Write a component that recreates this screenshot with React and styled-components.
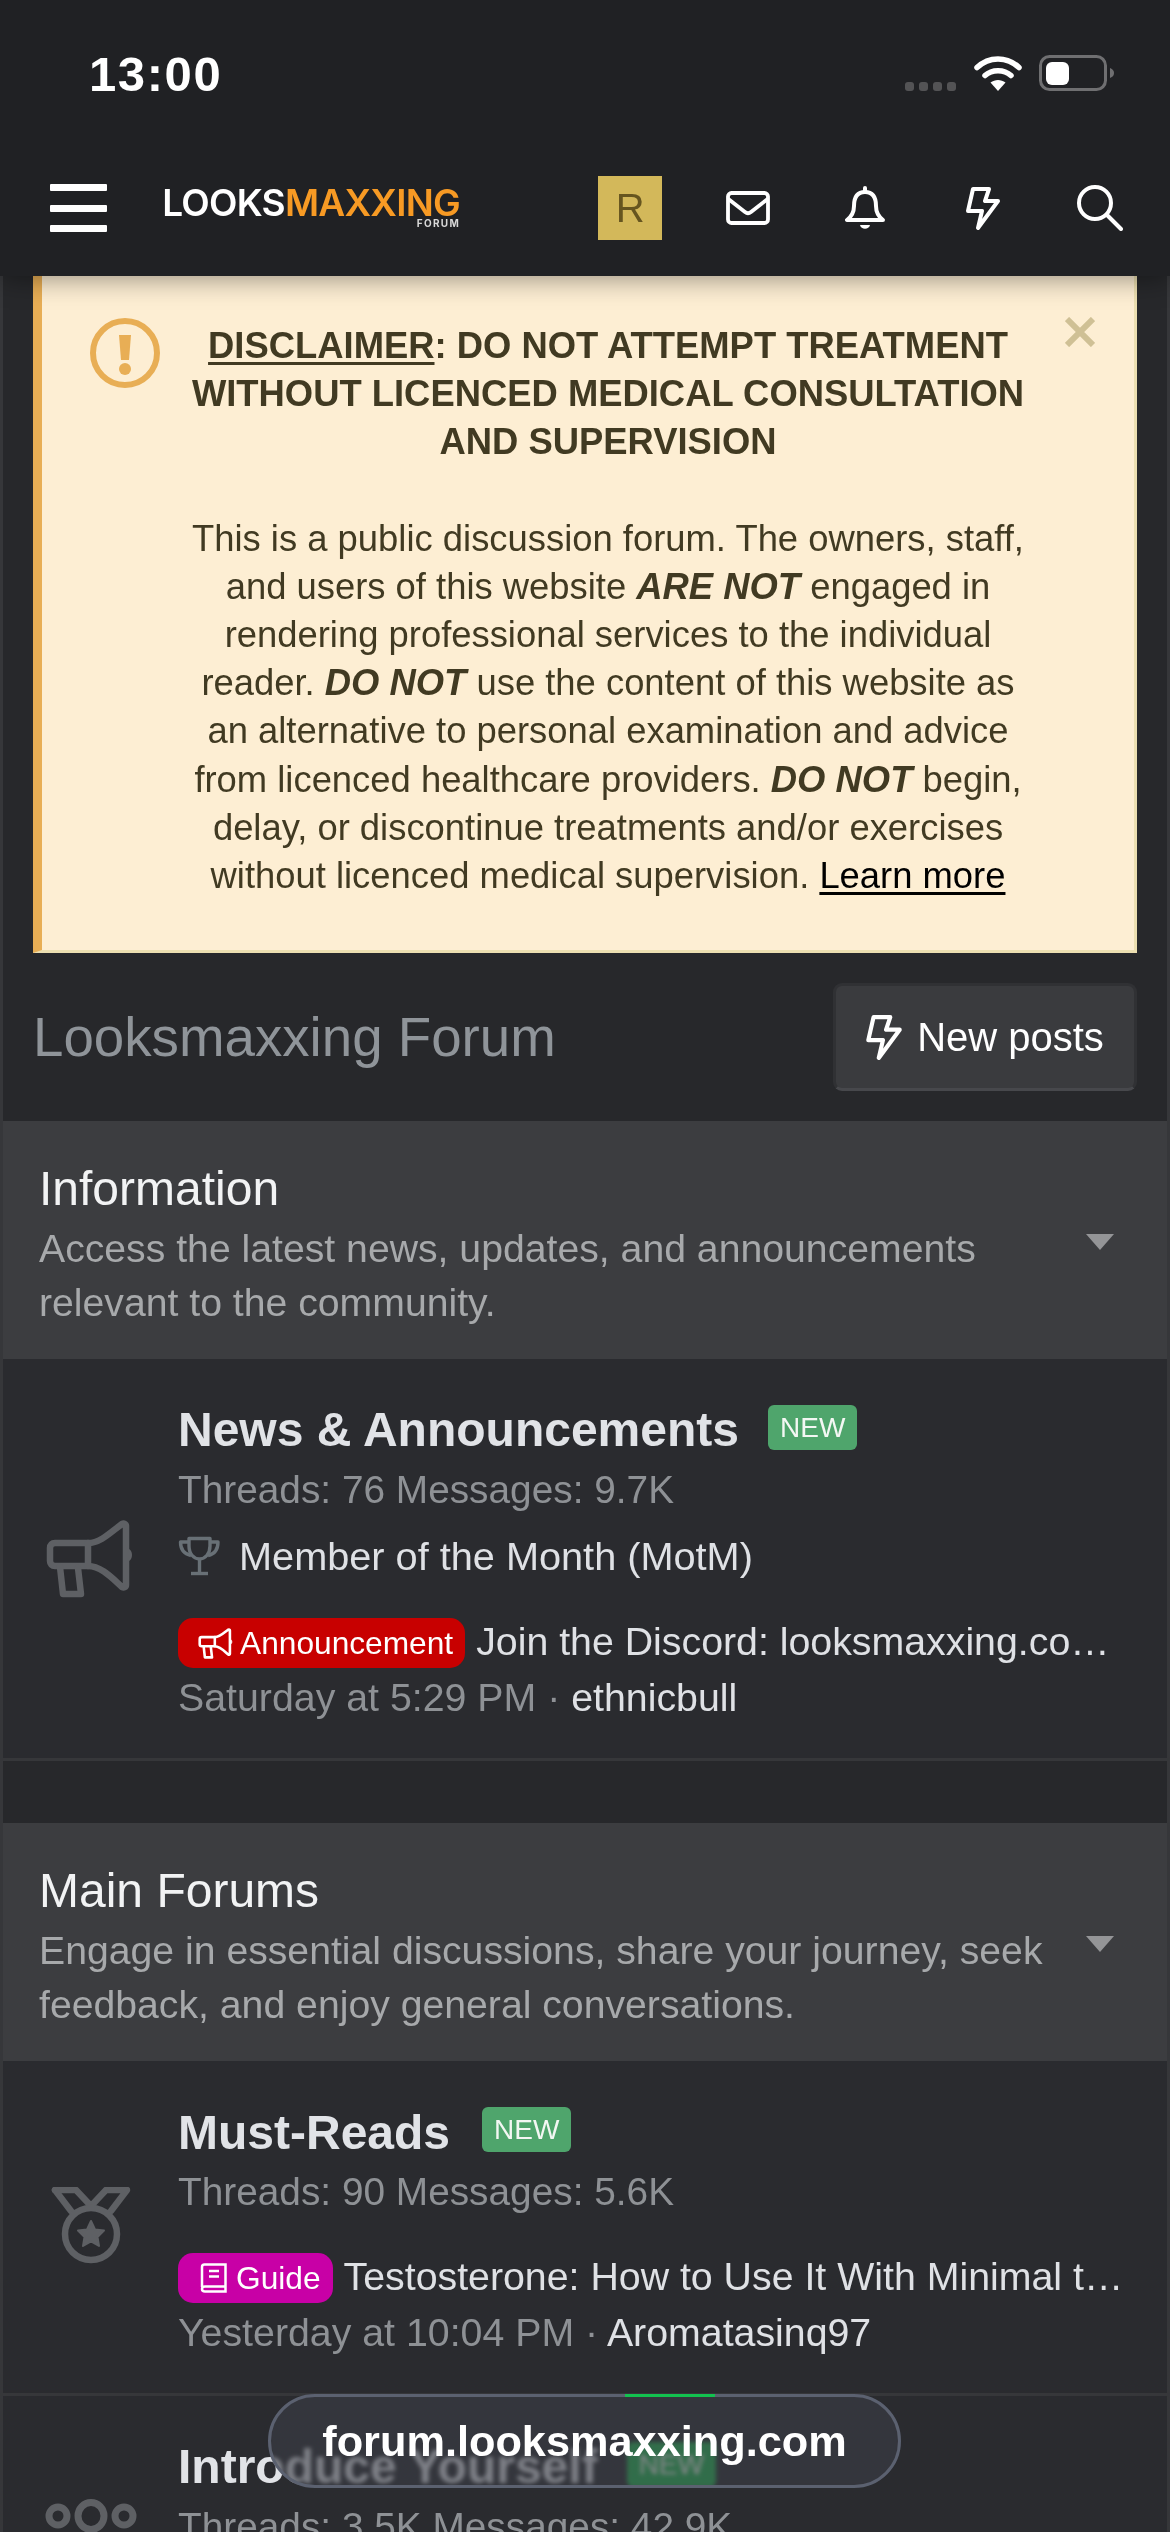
import React from "react";
import styled, { createGlobalStyle } from "styled-components";

const Global = createGlobalStyle`
  html, body { margin: 0; padding: 0; background: #27282b; }
  * { box-sizing: border-box; }
`;
const Screen = styled.div`
  position: relative; width: 1170px; height: 2532px; overflow: hidden;
  background: #27282b; font-family: "Liberation Sans", Arial, sans-serif; color: #dfe1e5;
`;
const TopBar = styled.header`
  position: relative; z-index: 2; height: 276px; background: #202124;
  box-shadow: 0 2px 26px rgba(0,0,0,.42); display: flex; flex-direction: column;
`;
const StatusBar = styled.div`
  height: 150px; display: flex; justify-content: space-between; align-items: flex-start;
  padding: 0 55px 0 89px;
`;
const Clock = styled.div`
  margin-top: 47px; font-size: 49px; line-height: 54px; font-weight: 700; color: #fff; letter-spacing: 1.6px;
`;
const StatusIcons = styled.div`
  margin-top: 55px; display: flex; align-items: flex-start; gap: 17px;
`;
const NavRow = styled.nav`
  flex: 1; display: flex; align-items: center; padding: 0 11px 0 50px; margin-top: -10px;
`;
const Hamburger = styled.div`
  width: 57px; height: 48px; display: flex; flex-direction: column; justify-content: space-between;
  span { display: block; height: 7px; background: #fff; border-radius: 1px; }
`;
const Logo = styled.div`
  margin-left: 55px; width: 298px; display: flex; flex-direction: column; align-items: flex-end;
  font-family: Inter, "Liberation Sans", sans-serif;
`;
const LogoMain = styled.div`
  font-size: 37px; line-height: 31px; font-weight: 600; color: #fff; letter-spacing: -.75px; white-space: nowrap;
  b { font-weight: 600; color: #f79a24; }
`;
const LogoSub = styled.div`
  font-size: 10px; line-height: 11px; font-weight: 700; color: #d8d8d8; letter-spacing: 1.3px;
`;
const NavIcons = styled.div`
  margin-left: auto; display: flex; align-items: center;
`;
const NavCell = styled.div`
  width: 117.5px; height: 64px; display: flex; align-items: center; justify-content: center;
`;
const Avatar = styled.div`
  width: 64px; height: 64px; background: #d3b85a; color: #66551f; font-size: 40px;
  display: flex; align-items: center; justify-content: center;
`;
const Main = styled.main`
  border-left: 3px solid #36373a; border-right: 3px solid #36373a; min-height: 2256px;
`;
const Notice = styled.section`
  position: relative; margin: 0 30px; height: 677px; background: #fdeed3; color: #413a22;
  border: 3px solid #ecdfb1; border-top: 0; border-left: 9px solid #e8ae55;
  padding: 46px 58px 0 98px; font-size: 36.4px; line-height: 48.2px; text-align: center;
  display: flex; flex-direction: column; gap: 48px;
`;
const NoticeIcon = styled.svg`
  position: absolute; left: 48px; top: 42px; width: 70px; height: 70px;
`;
const NoticeClose = styled.svg`
  position: absolute; right: 39px; top: 41px; width: 30px; height: 30px;
`;
const NoticeHead = styled.div`
  font-weight: 700; white-space: nowrap; u { text-decoration-thickness: 3px; text-underline-offset: 4px; }
`;
const NoticeBody = styled.div`
  white-space: nowrap;
  b { font-style: italic; }
  a { color: #000; text-decoration: underline; text-decoration-thickness: 3px; text-underline-offset: 4px; }
`;
const TitleBar = styled.div`
  display: flex; justify-content: space-between; align-items: center; margin: 30px 30px;
`;
const PageTitle = styled.h1`
  margin: 0; font-size: 54.7px; font-weight: 400; color: #8f9499; line-height: 66px;
`;
const NewPosts = styled.div`
  width: 304px; height: 108px; border: 3px solid #303134; border-bottom-color: #47484c; border-radius: 9px;
  background: #3a3b3e; color: #fff; font-size: 40px; display: flex; align-items: center; justify-content: center; gap: 15px;
`;
const SectionHead = styled.div`
  background: #3c3d40; display: flex; align-items: center; justify-content: space-between;
  padding: 36px 53px 29px 36px; margin-top: ${p => p.$gap || 0}px;
`;
const SectionText = styled.div`width: 1010px;`;
const SectionTitle = styled.div`font-size: 48px; line-height: 63px; color: #f2f3f4;`;
const SectionDesc = styled.div`
  font-size: 39.2px; line-height: 54px; color: #a7a9ab; margin-top: 2px;
`;
const Caret = styled.div`
  width: 0; height: 0; border-left: 14px solid transparent; border-right: 14px solid transparent;
  border-top: 16px solid #949597; margin-top: -4px;
`;
const Row = styled.article`
  background: #2a2b2f; border-bottom: 3px solid #36373a; display: flex; align-items: center;
`;
const RowIconCell = styled.div`
  width: 175px; flex: none; display: flex; justify-content: center; color: #5e6064;
  align-self: ${p => (p.$top ? "flex-start" : "center")};
  margin-top: ${p => p.$top || 0}px;
`;
const RowBody = styled.div`
  flex: 1; min-width: 0; padding: 40px 30px 34px 0; font-size: 39.3px; line-height: 54.6px;
`;
const TitleLine = styled.div`display: flex; align-items: center; gap: ${p => p.$gap || 29}px; height: 63px;`;
const RowTitle = styled.div`font-size: 48px; font-weight: 700; color: #e1e3e7;`;
const NewBadge = styled.span`
  background: #4fa56c; color: #f3f7f3; font-size: 28px; line-height: 45px; height: 45px; padding: 0 12px;
  border-radius: 6px; margin-top: -7px;
`;
const Stats = styled.div`color: #8e9195; font-size: 38.8px; margin-top: 1px;`;
const SubForum = styled.div`display: flex; align-items: center; gap: 19px; margin-top: 11px; color: #dfe1e5; font-size: 39.7px;`;
const LatestLine = styled.div`display: flex; align-items: center; gap: 11px; margin-top: ${p => p.$mt}px;`;
const Prefix = styled.span`
  flex: none; height: 50px; border-radius: 15px; background: ${p => p.$bg}; color: #fff; font-size: 31.7px; line-height: 50px;
  display: inline-flex; align-items: center; gap: ${p => p.$gap}px; padding: 0 ${p => p.$right}px 0 ${p => p.$left}px; margin-top: 4px;
`;
const LatestTitle = styled.span`
  flex: 1; min-width: 0; white-space: nowrap; overflow: hidden; text-overflow: ellipsis; color: #dfe1e5;
`;
const Meta = styled.div`color: #8e9195; margin-top: 1px; span { color: #dfe1e5; }`;
const UrlPill = styled.div`
  position: absolute; z-index: 3; left: 268px; top: 2394px; width: 633px; height: 94px; border-radius: 47px;
  background: rgba(60,61,68,.6); border: 3px solid #5b6170; backdrop-filter: blur(2px) saturate(1.7);
  display: flex; align-items: center; justify-content: center;
  color: #fff; font-size: 43.3px; font-weight: 700;
`;
const PillGlint = styled.span`
  position: absolute; left: 354px; top: -3px; width: 90px; height: 3px; background: #12c24f;
`;

const Bolt = ({ w = 34, h = 44, sw = 4 }) => (
  <svg width={w} height={h} viewBox="0 0 34 44" fill="none" stroke="#fff" strokeWidth={sw} strokeLinejoin="round" strokeLinecap="round">
    <path d="M7 3H23L19 15H32L12 42L16 25H2Z" />
  </svg>
);
const Wifi = () => (
  <svg width="48" height="37" viewBox="0 0 48 37" fill="none" stroke="#fff" strokeWidth="5.5" strokeLinecap="round">
    <path d="M3 12.5C15 1 33 1 45 12.5" />
    <path d="M11 20.5C18 14 30 14 37 20.5" />
    <path d="M16.5 27.5L24 36L31.5 27.5C27 24 21 24 16.5 27.5Z" fill="#fff" stroke="none" />
  </svg>
);
const Battery = () => (
  <svg width="76" height="37" viewBox="0 0 76 37" fill="none">
    <rect x="1.5" y="1.5" width="65" height="33" rx="9" stroke="#6f6f71" strokeWidth="3" />
    <rect x="7" y="7" width="23" height="23" rx="6" fill="#fff" />
    <path d="M71 13C74 14 75 16 75 18C75 20 74 22 71 23Z" fill="#6f6f71" />
  </svg>
);
const Dots = () => (
  <svg width="52" height="37" viewBox="0 0 52 37" fill="#535355">
    <rect x="0" y="27" width="9" height="9" rx="3" /><rect x="14" y="27" width="9" height="9" rx="3" />
    <rect x="28" y="27" width="9" height="9" rx="3" /><rect x="42" y="27" width="9" height="9" rx="3" />
  </svg>
);
const Mail = () => (
  <svg width="44" height="34" viewBox="0 0 44 34" fill="none" stroke="#fff" strokeWidth="3.8" strokeLinejoin="round" strokeLinecap="round">
    <rect x="2" y="2" width="40" height="30" rx="3.5" />
    <path d="M3 8.5L19 21C21 22.6 23 22.6 25 21L41 8.5" />
  </svg>
);
const Bell = () => (
  <svg width="40" height="45" viewBox="0 0 40 45" fill="none" stroke="#fff" strokeWidth="4" strokeLinejoin="round" strokeLinecap="round">
    <path d="M20 6C12 6 9 12 9 20C9 27 6 31 2 34H38C34 31 31 27 31 20C31 12 28 6 20 6Z" />
    <path d="M20 2V5" />
    <path d="M15 39C16 44 24 44 25 39Z" fill="#fff" stroke="none" />
  </svg>
);
const Search = () => (
  <svg width="46" height="46" viewBox="0 0 46 46" fill="none" stroke="#fff" strokeWidth="4" strokeLinecap="round">
    <circle cx="18" cy="18" r="16" />
    <path d="M30 30L44 44" />
  </svg>
);
const Megaphone = ({ w = 90, h = 78, c = "currentColor" }) => (
  <svg width={w} height={h} viewBox="0 0 90 78" fill="none" stroke={c} strokeWidth="6.5" strokeLinejoin="round" strokeLinecap="round">
    <path d="M9 23H42C55 23 66 11 76 4C78 3 80 4 80 6V65C80 67 78 68 76 67C66 58 55 46 42 46H9C6 46 4 44 4 41V28C4 25 6 23 9 23Z" />
    <path d="M42 23V46" />
    <path d="M14 47L17 74H35L32 48" />
    <path d="M83 29C87 31 87 39 83 41Z" fill={c} stroke="none" />
  </svg>
);
const Medal = () => (
  <svg width="80" height="80" viewBox="0 0 80 80" fill="none" stroke="currentColor" strokeWidth="6.5" strokeLinejoin="round" strokeLinecap="round">
    <path d="M4 3H25L40 19L55 3H76L60 24" />
    <path d="M4 3L20 24" />
    <circle cx="40" cy="47" r="26" />
    <path d="M40 34L44 42.5L53 43.5L46.5 50L48 59L40 54.5L32 59L33.5 50L27 43.5L36 42.5Z" fill="currentColor" strokeWidth="2" />
  </svg>
);
const Users = () => (
  <svg width="92" height="80" viewBox="0 0 92 80" fill="none" stroke="currentColor" strokeWidth="7">
    <circle cx="13" cy="17" r="9" />
    <ellipse cx="46" cy="17" rx="13" ry="13.5" />
    <circle cx="79" cy="17" r="9" />
  </svg>
);
const Trophy = () => (
  <svg width="42" height="40" viewBox="0 0 42 40" fill="none" stroke="#687076" strokeWidth="3.4" strokeLinejoin="round">
    <path d="M11 2.5H32V10C32 18 27 23 21.5 23C16 23 11 18 11 10Z" />
    <path d="M11 6H2.5C2.5 14 6 18 13 19.5M32 6H40C40 14 37 18 30 19.5" />
    <path d="M21.5 23V36" />
    <path d="M13 37.5H30" />
  </svg>
);
const MiniBook = () => (
  <svg width="27" height="30" viewBox="0 0 27 30" fill="none" stroke="#fff" strokeWidth="2.5">
    <path d="M2 24V4C2 2.5 3 1.5 4.5 1.5H25.5V28.5H5C3 28.5 2 27.5 2 26C2 24.5 3 23.5 5 23.5H25.5" />
    <path d="M9 8H19M9 13.5H19" />
  </svg>
);

export default function App() {
  return (
    <Screen>
      <Global />
      <TopBar>
        <StatusBar>
          <Clock>13:00</Clock>
          <StatusIcons><Dots /><Wifi /><Battery /></StatusIcons>
        </StatusBar>
        <NavRow>
          <Hamburger><span /><span /><span /></Hamburger>
          <Logo>
            <LogoMain>LOOKS<b>MAXXING</b></LogoMain>
            <LogoSub>FORUM</LogoSub>
          </Logo>
          <NavIcons>
            <NavCell><Avatar>R</Avatar></NavCell>
            <NavCell><Mail /></NavCell>
            <NavCell><Bell /></NavCell>
            <NavCell><Bolt /></NavCell>
            <NavCell><Search /></NavCell>
          </NavIcons>
        </NavRow>
      </TopBar>
      <Main>
        <Notice>
          <NoticeIcon viewBox="0 0 70 70" fill="none">
            <circle cx="35" cy="35" r="32" stroke="#e8ae55" strokeWidth="6" />
            <path d="M29 17H41L39 42H31Z" fill="#e8ae55" />
            <circle cx="35" cy="51" r="6" fill="#e8ae55" />
          </NoticeIcon>
          <NoticeClose viewBox="0 0 30 30" stroke="#cfc095" strokeWidth="6">
            <path d="M2 2L28 28M28 2L2 28" />
          </NoticeClose>
          <NoticeHead>
            <u>DISCLAIMER</u>: DO NOT ATTEMPT TREATMENT<br />
            WITHOUT LICENCED MEDICAL CONSULTATION<br />
            AND SUPERVISION
          </NoticeHead>
          <NoticeBody>
            This is a public discussion forum. The owners, staff,<br />
            and users of this website <b>ARE NOT</b> engaged in<br />
            rendering professional services to the individual<br />
            reader. <b>DO NOT</b> use the content of this website as<br />
            an alternative to personal examination and advice<br />
            from licenced healthcare providers. <b>DO NOT</b> begin,<br />
            delay, or discontinue treatments and/or exercises<br />
            without licenced medical supervision. <a>Learn more</a>
          </NoticeBody>
        </Notice>
        <TitleBar>
          <PageTitle>Looksmaxxing Forum</PageTitle>
          <NewPosts><Bolt w={36} h={46} />New posts</NewPosts>
        </TitleBar>

        <SectionHead>
          <SectionText>
            <SectionTitle>Information</SectionTitle>
            <SectionDesc>Access the latest news, updates, and announcements relevant to the community.</SectionDesc>
          </SectionText>
          <Caret />
        </SectionHead>
        <Row>
          <RowIconCell><Megaphone /></RowIconCell>
          <RowBody>
            <TitleLine><RowTitle>News &amp; Announcements</RowTitle><NewBadge>NEW</NewBadge></TitleLine>
            <Stats>Threads: 76 Messages: 9.7K</Stats>
            <SubForum><Trophy />Member of the Month (MotM)</SubForum>
            <LatestLine $mt={31}>
              <Prefix $bg="#c80000" $left={20} $right={12} $gap={6}><Megaphone w={36} h={31} c="#fff" />Announcement</Prefix>
              <LatestTitle>Join the Discord: looksmaxxing.com/discord-server</LatestTitle>
            </LatestLine>
            <Meta>Saturday at 5:29 PM · <span>ethnicbull</span></Meta>
          </RowBody>
        </Row>

        <SectionHead $gap={62}>
          <SectionText>
            <SectionTitle>Main Forums</SectionTitle>
            <SectionDesc>Engage in essential discussions, share your journey, seek feedback, and enjoy general conversations.</SectionDesc>
          </SectionText>
          <Caret />
        </SectionHead>
        <Row>
          <RowIconCell><Medal /></RowIconCell>
          <RowBody>
            <TitleLine $gap={32}><RowTitle>Must-Reads</RowTitle><NewBadge>NEW</NewBadge></TitleLine>
            <Stats>Threads: 90 Messages: 5.6K</Stats>
            <LatestLine $mt={29}>
              <Prefix $bg="#c800a6" $left={22} $right={12} $gap={9}><MiniBook />Guide</Prefix>
              <LatestTitle>Testosterone: How to Use It With Minimal the Side Effects</LatestTitle>
            </LatestLine>
            <Meta>Yesterday at 10:04 PM · <span>Aromatasinq97</span></Meta>
          </RowBody>
        </Row>
        <Row>
          <RowIconCell $top={103}><Users /></RowIconCell>
          <RowBody>
            <TitleLine><RowTitle>Introduce Yourself</RowTitle><NewBadge>NEW</NewBadge></TitleLine>
            <Stats>Threads: 3.5K Messages: 42.9K</Stats>
          </RowBody>
        </Row>
      </Main>
      <UrlPill><PillGlint />forum.looksmaxxing.com</UrlPill>
    </Screen>
  );
}
